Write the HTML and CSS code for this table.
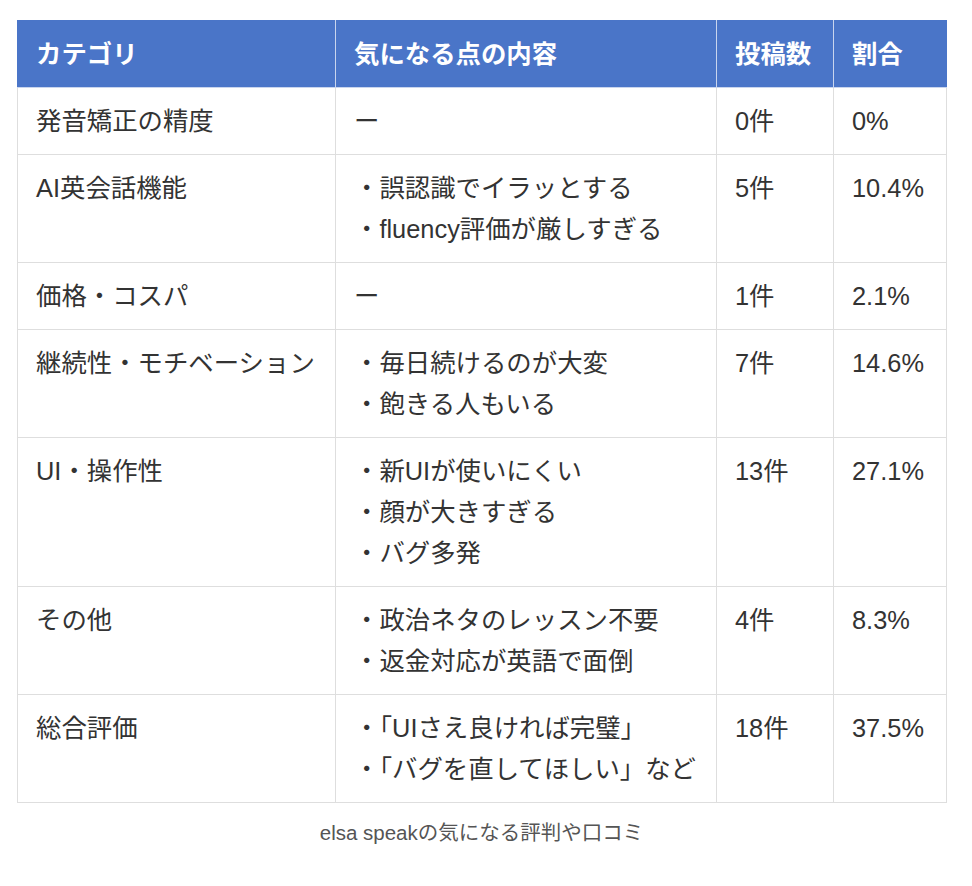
FILE: index.html
```html
<!DOCTYPE html>
<html lang="ja">
<head>
<meta charset="utf-8">
<title>elsa speakの気になる評判や口コミ</title>
<link rel="stylesheet" href="styles.css">
</head>
<body>
<figure class="fig">
  <table class="tbl">
    <colgroup>
      <col class="c1"><col class="c2"><col class="c3"><col class="c4">
    </colgroup>
    <thead>
      <tr><th>カテゴリ</th><th>気になる点の内容</th><th>投稿数</th><th>割合</th></tr>
    </thead>
    <tbody>
      <tr><td>発音矯正の精度</td><td>ー</td><td>0件</td><td>0%</td></tr>
      <tr><td>AI英会話機能</td><td><div>・誤認識でイラッとする</div><div>・fluency評価が厳しすぎる</div></td><td>5件</td><td>10.4%</td></tr>
      <tr><td>価格・コスパ</td><td>ー</td><td>1件</td><td>2.1%</td></tr>
      <tr><td>継続性・モチベーション</td><td><div>・毎日続けるのが大変</div><div>・飽きる人もいる</div></td><td>7件</td><td>14.6%</td></tr>
      <tr><td>UI・操作性</td><td><div>・新UIが使いにくい</div><div>・顔が大きすぎる</div><div>・バグ多発</div></td><td>13件</td><td>27.1%</td></tr>
      <tr><td>その他</td><td><div>・政治ネタのレッスン不要</div><div>・返金対応が英語で面倒</div></td><td>4件</td><td>8.3%</td></tr>
      <tr><td>総合評価</td><td><div>・「UIさえ良ければ完璧」</div><div>・「バグを直してほしい」など</div></td><td>18件</td><td>37.5%</td></tr>
    </tbody>
  </table>
  <figcaption class="cap">elsa speakの気になる評判や口コミ</figcaption>
</figure>
</body>
</html>
```

FILE: styles.css
```css
html, body {
  margin: 0;
  padding: 0;
  background: #ffffff;
}
body {
  font-family: "Liberation Sans", "Noto Sans CJK JP", sans-serif;
  color: #333333;
}
.fig {
  margin: 0;
  padding: 20px 0 0 17px;
  width: 929px;
}
.tbl {
  width: 929px;
  border-collapse: collapse;
  table-layout: fixed;
  font-size: 25.4px;
  line-height: 41px;
}
.c1 { width: 318px; }
.c2 { width: 381px; }
.c3 { width: 117px; }
.c4 { width: 113px; }
.tbl th, .tbl td {
  text-align: left;
  vertical-align: top;
  padding: 13px 0 12px 18px;
  border: 1px solid #dedede;
  white-space: nowrap;
  overflow: visible;
}
.tbl th {
  background: #4a75c8;
  color: #ffffff;
  font-weight: bold;
  border-color: #c9d5ee;
  border-top-color: #4a75c8;
}
.tbl th:first-child { border-left-color: #4a75c8; }
.tbl th:last-child { border-right-color: #4a75c8; }
.cap {
  margin: 14px 0 0 0;
  text-align: center;
  font-size: 20.5px;
  line-height: 32px;
  color: #555555;
}
```
